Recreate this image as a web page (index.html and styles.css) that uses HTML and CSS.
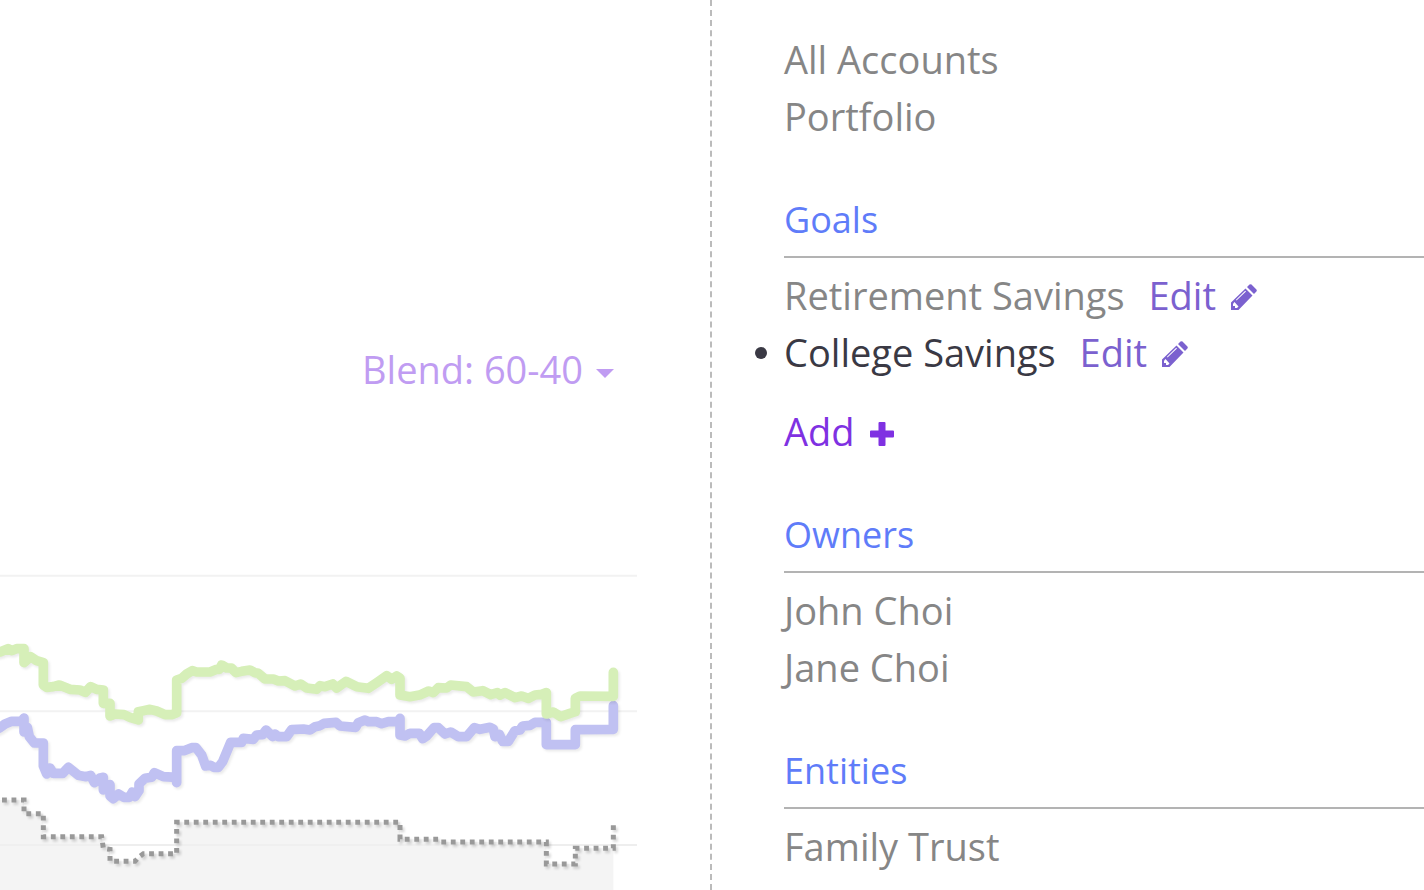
FILE: index.html
```html
<!DOCTYPE html>
<html lang="en">
<head>
    <meta charset="UTF-8">
    <meta name="viewport" content="width=device-width, initial-scale=1.0">
    <title>Portfolio</title>
    <link rel="stylesheet" href="styles.css">
</head>
<body>
    <main class="performance">
        <div class="blend">
            <select class="blend-select" aria-label="Benchmark">
                <option>Blend: 60-40</option>
            </select>
            <svg class="caret" viewBox="0 0 18 10" aria-hidden="true"><path d="M0 0h18L9 9z"/></svg>
        </div>
        <svg class="chart" viewBox="0 -210 1911 990" role="img" aria-label="Performance chart">
            <path class="grid-line" d="M0-163H1911M0 244H1911M0 645H1911"/>
            <path class="area" d="M0 510H72V551H130V620H305L310 655L330 658V694H405L418 680L430 671H530V577H1200V628H1315L1320 636H1639V702H1726V655H1840V780H0Z"/>
            <path class="grid-line faint" d="M0 645H1911"/>
            <path class="line dotted" d="M0 510H72V551H130V620H305L310 655L330 658V694H405L418 680L430 671H530V577H1200V628H1315L1320 636H1639V702H1726V655H1840V585"/>
            <path class="line blue" d="M-20 303L0 293L15 282L35 274H65L72 264V306L82 292L88 320L103 339H130V408L140 432L150 414L160 430H188L205 412L235 436L258 440L272 436L283 458L300 444L310 442V480L330 464V498L340 506L356 492L372 502H388L397 486L405 500L417 482V462L435 445L455 442L463 428L490 440L530 442V458V362H552L575 353H588L605 375L617 408L632 406L642 412H655L668 395L692 337H725L730 325L760 328L770 315L788 314L798 300L818 320L825 312L835 320H860L875 299L910 297L930 300L945 290L960 287L972 280L1008 277L1020 288L1067 292L1075 278L1095 270L1105 275H1130L1145 281L1165 275L1200 274V265V315L1215 318L1230 310H1258L1268 326L1280 318L1302 293H1315L1335 312L1352 306L1375 320H1400L1423 293L1440 298L1470 292L1480 297L1485 320L1498 313L1508 334H1525L1545 302L1560 300L1568 288L1590 286L1605 277H1639V344H1726V299L1840 298V227"/>
            <path class="line green" d="M-20 70L0 66L24 56L36 62L50 56H72V98L92 80L110 92L130 98V165L140 172L160 170L178 165L210 178L240 180L256 187L272 170L290 178L310 180V220H330V258L345 252L372 254L390 262L415 270V245L430 242L450 238L470 243L495 254H515L530 248V150L545 145L560 132L577 122L590 126L630 126L650 118H658L665 105L680 114H694L708 128L725 124L750 120L765 128L775 130L795 147H820L835 153L855 152L885 168L902 162L920 174L950 178L960 167L975 170L998 162L1010 174L1038 154L1070 170L1105 175L1130 158L1160 137L1175 148L1190 138L1200 145V195L1230 200L1262 194L1286 183L1300 188L1315 173L1340 174L1352 165L1400 170L1420 186L1448 182L1472 194L1492 188L1500 195L1515 188L1545 203L1565 198L1585 205L1605 195L1625 193L1639 188V252L1660 246L1682 260L1710 250L1726 245V205L1740 198L1840 199V127"/>
        </svg>
    </main>

    <aside class="sidebar">
        <ul class="list">
            <li>All Accounts</li>
            <li>Portfolio</li>
        </ul>

        <h2>Goals</h2>
        <ul class="list">
            <li>Retirement Savings
                <a class="edit" href="#">Edit <svg class="pencil" viewBox="0 0 26 26" aria-hidden="true"><path fill-rule="evenodd" d="M14.500 4.500L21.500 11.500L7.500 26H0V18.500ZM3 18.500L2 20V22H4V24H6L7.500 22.500L3.500 18ZM5.500 16.500L15 7.500L14.200 6.700L5 15.700ZM16 3L18.500.6Q19.500-.2 20.500.6L25.400 5.500Q26.200 6.500 25.400 7.500L23 10Z"/></svg></a>
            </li>
            <li class="active">College Savings
                <a class="edit" href="#">Edit <svg class="pencil" viewBox="0 0 26 26" aria-hidden="true"><path fill-rule="evenodd" d="M14.500 4.500L21.500 11.500L7.500 26H0V18.500ZM3 18.500L2 20V22H4V24H6L7.500 22.500L3.500 18ZM5.500 16.500L15 7.500L14.200 6.700L5 15.700ZM16 3L18.500.6Q19.500-.2 20.500.6L25.400 5.500Q26.200 6.500 25.400 7.500L23 10Z"/></svg></a>
            </li>
        </ul>
        <button class="add" type="button">Add <svg class="plus" viewBox="0 0 24 24" aria-hidden="true"><path d="M9.500 0h5q1 0 1 1v7.500h7.500q1 0 1 1v5q0 1-1 1h-7.500v7.500q0 1-1 1h-5q-1 0-1-1v-7.500H1q-1 0-1-1v-5q0-1 1-1h7.500V1q0-1 1-1z"/></svg></button>

        <h2>Owners</h2>
        <ul class="list">
            <li>John Choi</li>
            <li>Jane Choi</li>
        </ul>

        <h2>Entities</h2>
        <ul class="list">
            <li>Family Trust</li>
        </ul>
    </aside>
</body>
</html>
```
FILE: styles.css
```css
* {
    box-sizing: border-box;
}
body {
    margin: 0;
    display: flex;
    min-height: 100vh;
    font-family: "Open Sans", sans-serif;
    font-size: 38px;
    line-height: 57px;
    color: #868686;
    background-color: #fff;
    overflow: hidden;
}
.performance {
    width: calc(50% - 2px);
    padding: 341px 73px 0 0;
    display: flex;
    flex-direction: column;
    justify-content: space-between;
}
.blend {
    display: flex;
    justify-content: flex-end;
    align-items: center;
    gap: 12px;
    padding-right: 23px;
}
.blend-select {
    appearance: none;
    border: none;
    padding: 0;
    background: none;
    font: inherit;
    color: #c09cf2;
    cursor: pointer;
}
.caret {
    width: 18px;
    height: 10px;
    margin-top: 8px;
    fill: #c09cf2;
}
.chart {
    display: block;
    width: 100%;
}
.grid-line {
    stroke: #f2f2f2;
    stroke-width: 6;
}
.faint {
    stroke: #ebebeb;
    stroke-opacity: 0.6;
}
.area {
    fill: #f4f4f4;
}
.line {
    fill: none;
    stroke-width: 29;
    stroke-linecap: round;
    stroke-linejoin: round;
    filter: drop-shadow(5px 6px 3px rgba(0, 0, 0, 0.08));
}
.dotted {
    stroke: #999;
    stroke-width: 15;
    stroke-linecap: butt;
    stroke-linejoin: miter;
    stroke-dasharray: 14.500 14;
    stroke-dashoffset: -6;
    filter: drop-shadow(6px 7px 3px rgba(0, 0, 0, 0.15));
}
.blue {
    stroke: #c0c1f2;
}
.green {
    stroke: #d6efb8;
}
.sidebar {
    flex: 1;
    padding: 31px 0 0 72px;
    border-left: 2px dashed #bbb;
}
.sidebar h2 {
    margin: 46px 0 9px;
    padding-bottom: 8px;
    border-bottom: 2px solid #b3b3b3;
    font-size: 36px;
    font-weight: 400;
    line-height: 57px;
    color: #5f7cf9;
}
.list {
    margin: 0;
    padding: 0;
    list-style: none;
}
.list li {
    position: relative;
    white-space: nowrap;
}
.list .active {
    color: #3a3944;
}
.list .active::before {
    content: "";
    position: absolute;
    left: -29px;
    top: 23px;
    width: 12px;
    height: 12px;
    border-radius: 50%;
    background-color: #3a3944;
}
.edit {
    margin-left: 14px;
    color: #7b61cf;
    text-decoration: none;
}
.pencil {
    width: 26px;
    height: 26px;
    margin-left: 5px;
    fill: currentColor;
}
.add {
    display: block;
    margin: 22px 0 0;
    padding: 0;
    border: none;
    background: none;
    font: inherit;
    color: #7f31e2;
    cursor: pointer;
}
.plus {
    width: 24px;
    height: 24px;
    margin-left: 6px;
    fill: currentColor;
}
```
